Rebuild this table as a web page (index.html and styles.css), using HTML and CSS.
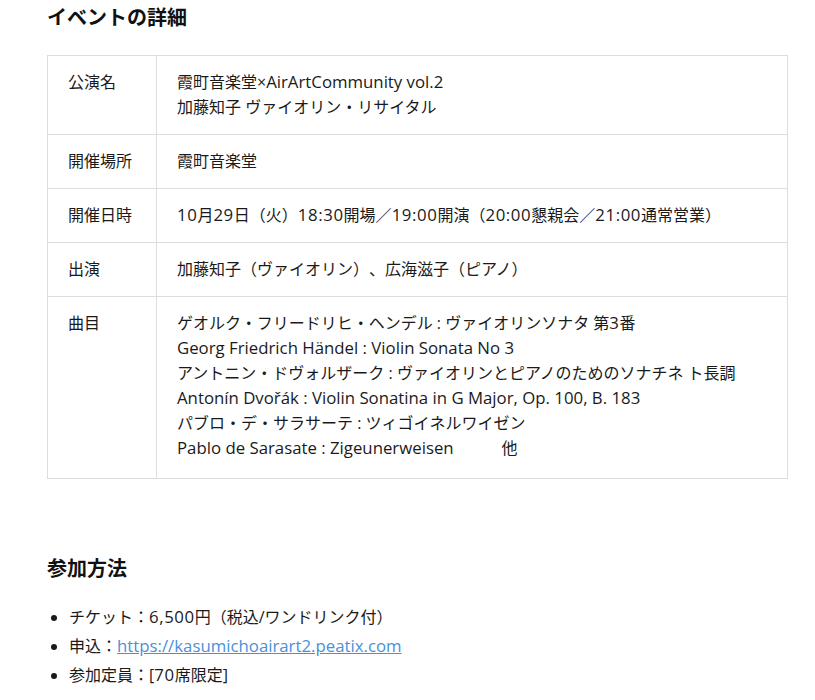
FILE: index.html
```html
<!DOCTYPE html>
<html lang="ja">
<head>
<meta charset="utf-8">
<link rel="stylesheet" href="styles.css">
</head>
<body>
<div class="page">
  <h2 class="heading">イベントの詳細</h2>
  <table class="details">
    <tr>
      <th>公演名</th>
      <td>霞町音楽堂×<span class="lat">AirArtCommunity vol.2</span><br>加藤知子 ヴァイオリン・リサイタル</td>
    </tr>
    <tr>
      <th>開催場所</th>
      <td>霞町音楽堂</td>
    </tr>
    <tr>
      <th>開催日時</th>
      <td><span class="num">10</span>月<span class="num">29</span>日（火）<span class="num">18:30</span>開場／<span class="num">19:00</span>開演（<span class="num">20:00</span>懇親会／<span class="num">21:00</span>通常営業）</td>
    </tr>
    <tr>
      <th>出演</th>
      <td>加藤知子（ヴァイオリン）、広海滋子（ピアノ）</td>
    </tr>
    <tr class="last-row">
      <th>曲目</th>
      <td>ゲオルク・フリードリヒ・ヘンデル : ヴァイオリンソナタ 第<span class="num">3</span>番<br><span class="lat">Georg Friedrich Händel : Violin Sonata No 3</span><br>アントニン・ドヴォルザーク : ヴァイオリンとピアノのためのソナチネ ト長調<br><span class="lat">Antonín Dvořák : Violin Sonatina in G Major, Op. 100, B. 183</span><br>パブロ・デ・サラサーテ : ツィゴイネルワイゼン<br><span class="lat">Pablo de Sarasate : Zigeunerweisen</span><span class="etc">他</span></td>
    </tr>
  </table>

  <h2 class="heading heading-second">参加方法</h2>
  <ul class="info-list">
    <li>チケット：<span class="num">6,500</span>円（税込/ワンドリンク付）</li>
    <li>申込：<a href="#" class="link lat">https://kasumichoairart2.peatix.com</a></li>
    <li>参加定員：[<span class="num">70</span>席限定]</li>
  </ul>
</div>
</body>
</html>
```

FILE: styles.css
```css
html, body {
  margin: 0;
  padding: 0;
  background: #fff;
}

body {
  font-family: "Open Sans", "Noto Sans CJK JP", sans-serif;
  color: #1a1a1a;
  font-size: 16px;
  text-spacing-trim: space-all;
}

.page {
  padding: 3px 27px 0 47px;
}

.heading {
  margin: 0;
  font-size: 20px;
  line-height: 30px;
  font-weight: bold;
  color: #111;
}

.heading-second {
  margin-top: 75px;
}

.details {
  margin-top: 22px;
  width: 100%;
  border-collapse: collapse;
  border: 1px solid #dddddd;
}

.details th,
.details td {
  border: 1px solid #dddddd;
  padding: 14px 20px;
  line-height: 25px;
  text-align: left;
  vertical-align: top;
  font-weight: normal;
}

.details th {
  width: 68px;
  white-space: nowrap;
}

.last-row th,
.last-row td {
  padding-bottom: 17px;
}

.lat {
  font-size: 16.8px;
  line-height: 1;
}

.num {
  font-size: 16.8px;
  line-height: 1;
  letter-spacing: 0.6px;
}

.etc {
  margin-left: 48px;
}

.info-list {
  margin: 19px 0 0 0;
  padding-left: 22px;
}

.info-list li {
  line-height: 29px;
}

.link {
  color: #4a90d9;
  text-decoration: underline;
}
```
